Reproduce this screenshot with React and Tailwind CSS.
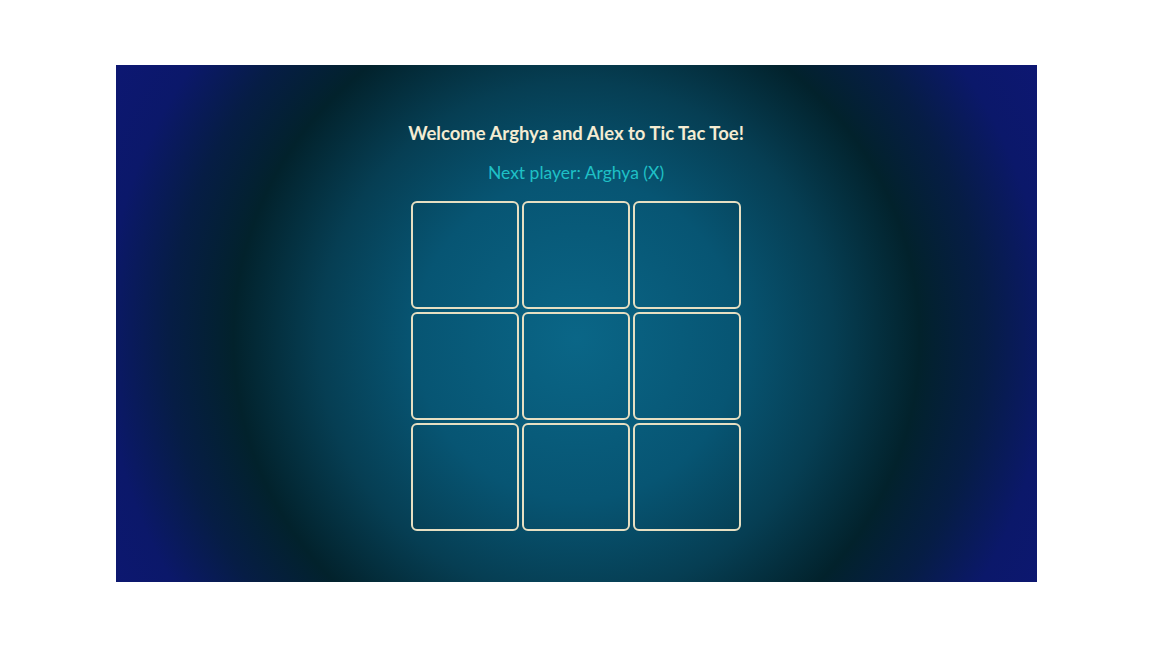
export default function App() {
  const cells = Array.from({ length: 9 });
  return (
    <div className="w-[1152px] h-[648px] bg-white flex items-start justify-center pt-[65px]" style={{ fontFamily: "Lato, 'Open Sans', sans-serif" }}>
      <div className="w-[921px] h-[517px] flex flex-col items-center bg-[radial-gradient(circle_at_50%_53%,#0a6687_0%,#075573_30%,#063e53_48%,#02222c_64%,#061d45_76%,#0b186a_88%,#0d1772_100%)]">
        <h1 className="mt-[56px] text-[18.5px] leading-[24px] font-bold text-[#f4ecd2]">Welcome Arghya and Alex to Tic Tac Toe!</h1>
        <p className="mt-[16px] text-[17.5px] leading-[24px] text-[#1fc0c6]">Next player: Arghya (X)</p>
        <div className="mt-[16px] grid grid-cols-[repeat(3,108px)] grid-rows-[repeat(3,108px)] gap-[3px]">
          {cells.map((_, i) => (
            <button key={i} className="border-2 border-[#e6dfc2] rounded-[6px] bg-transparent" />
          ))}
        </div>
      </div>
    </div>
  );
}
